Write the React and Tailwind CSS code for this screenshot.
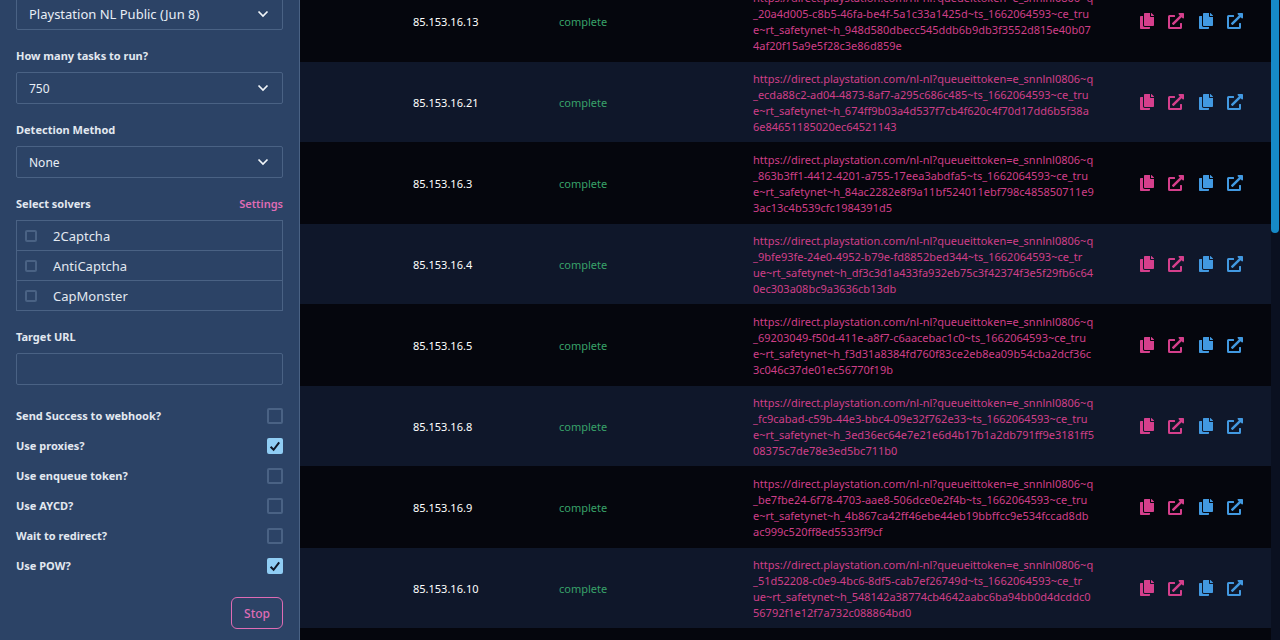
import { FaCopy, FaExternalLinkAlt } from "react-icons/fa";

const BASE = "https://direct.playstation.com/nl-nl?queueittoken=e_snnlnl0806~q";

const rows = [
  { ip: "85.153.16.13", url: [BASE, "_20a4d005-c8b5-46fa-be4f-5a1c33a1425d~ts_1662064593~ce_tru", "e~rt_safetynet~h_948d580dbecc545ddb6b9db3f3552d815e40b07", "4af20f15a9e5f28c3e86d859e"] },
  { ip: "85.153.16.21", url: [BASE, "_ecda88c2-ad04-4873-8af7-a295c686c485~ts_1662064593~ce_tru", "e~rt_safetynet~h_674ff9b03a4d537f7cb4f620c4f70d17dd6b5f38a", "6e84651185020ec64521143"] },
  { ip: "85.153.16.3", url: [BASE, "_863b3ff1-4412-4201-a755-17eea3abdfa5~ts_1662064593~ce_tru", "e~rt_safetynet~h_84ac2282e8f9a11bf524011ebf798c485850711e9", "3ac13c4b539cfc1984391d5"] },
  { ip: "85.153.16.4", url: [BASE, "_9bfe93fe-24e0-4952-b79e-fd8852bed344~ts_1662064593~ce_tr", "ue~rt_safetynet~h_df3c3d1a433fa932eb75c3f42374f3e5f29fb6c64", "0ec303a08bc9a3636cb13db"] },
  { ip: "85.153.16.5", url: [BASE, "_69203049-f50d-411e-a8f7-c6aacebac1c0~ts_1662064593~ce_tru", "e~rt_safetynet~h_f3d31a8384fd760f83ce2eb8ea09b54cba2dcf36c", "3c046c37de01ec56770f19b"] },
  { ip: "85.153.16.8", url: [BASE, "_fc9cabad-c59b-44e3-bbc4-09e32f762e33~ts_1662064593~ce_tru", "e~rt_safetynet~h_3ed36ec64e7e21e6d4b17b1a2db791ff9e3181ff5", "08375c7de78e3ed5bc711b0"] },
  { ip: "85.153.16.9", url: [BASE, "_be7fbe24-6f78-4703-aae8-506dce0e2f4b~ts_1662064593~ce_tru", "e~rt_safetynet~h_4b867ca42ff46ebe44eb19bbffcc9e534fccad8db", "ac999c520ff8ed5533ff9cf"] },
  { ip: "85.153.16.10", url: [BASE, "_51d52208-c0e9-4bc6-8df5-cab7ef26749d~ts_1662064593~ce_tr", "ue~rt_safetynet~h_548142a38774cb4642aabc6ba94bb0d4dcddc0", "56792f1e12f7a732c088864bd0"] },
];

const options = [
  { label: "Send Success to webhook?", id: "webhook", on: false },
  { label: "Use proxies?", id: "proxies", on: true },
  { label: "Use enqueue token?", id: "enqueue", on: false },
  { label: "Use AYCD?", id: "aycd", on: false },
  { label: "Wait to redirect?", id: "redirect", on: false },
  { label: "Use POW?", id: "pow", on: true },
];

function SelectBox({ id, value, large, label }) {
  return (
    <div className="grid items-center">
      <select
        id={id}
        aria-label={label}
        className={
          "col-start-1 row-start-1 h-8 w-full appearance-none rounded-[2px] border border-[#4a6284] bg-transparent px-3 pt-0.5 text-[#e8eef6] outline-none " +
          (large ? "text-[13px]" : "text-xs")
        }
      >
        <option>{value}</option>
      </select>
      <svg viewBox="0 0 20 20" className="pointer-events-none col-start-1 row-start-1 mr-2.5 size-5 justify-self-end" fill="none" stroke="#f1f5f9" strokeWidth="1.7">
        <path d="M5.5 7.5 10 12l4.5-4.5" />
      </svg>
    </div>
  );
}

function Field({ id, label, children }) {
  return (
    <div className="flex flex-col gap-1.5">
      <label htmlFor={id} className="text-[11px]/5 font-bold">{label}</label>
      {children}
    </div>
  );
}

function Check({ id, on }) {
  return (
    <span className="grid size-4 shrink-0">
      <input
        id={id}
        type="checkbox"
        defaultChecked={on}
        className="peer col-start-1 row-start-1 size-4 appearance-none rounded-[2px] border-2 border-[#4a6284] checked:border-[#90cdf4] checked:bg-[#90cdf4]"
      />
      <svg viewBox="0 0 16 16" className="pointer-events-none invisible col-start-1 row-start-1 size-4 peer-checked:visible" fill="none" stroke="#111827" strokeWidth="2">
        <path d="M3.6 8.8 6.6 11.8 12.2 4.4" />
      </svg>
    </span>
  );
}

function IconPair({ tone, what }) {
  return (
    <div className="flex items-center gap-3.5">
      <button type="button" aria-label={"Copy " + what} className={tone}><FaCopy className="h-4 w-3.5" /></button>
      <a href="#open" aria-label={"Open " + what} className={tone}><FaExternalLinkAlt className="size-4" /></a>
    </div>
  );
}

export default function App() {
  return (
    <div className="flex h-screen overflow-hidden bg-[#05060d] font-['Noto_Sans','Open_Sans',sans-serif] text-[#e2e8f0]">
      <aside className="w-[300px] shrink-0 overflow-hidden border-r border-[#4a6284] bg-[#2c4366] px-4">
        <form className="-mt-0.5 flex flex-col gap-4">
          <SelectBox id="event" label="Event" value="Playstation NL Public (Jun 8)" large />
          <Field id="tasks" label="How many tasks to run?"><SelectBox id="tasks" value="750" /></Field>
          <Field id="detection" label="Detection Method"><SelectBox id="detection" value="None" /></Field>
          <fieldset>
            <div className="mb-1.5 flex justify-between text-[11px]/5">
              <span className="font-bold">Select solvers</span>
              <a href="#settings" className="font-semibold text-[#df6cb5]">Settings</a>
            </div>
            <ul className="divide-y divide-[#4a6284] border border-[#4a6284]">
              {["2Captcha", "AntiCaptcha", "CapMonster"].map((name) => (
                <li key={name}>
                  <label className="flex h-[29px] items-center gap-4 px-2 text-[13px]">
                    <input type="checkbox" className="size-3 appearance-none rounded-[2px] border-2 border-[#4a6284]" />
                    <span className="pt-0.5">{name}</span>
                  </label>
                </li>
              ))}
            </ul>
          </fieldset>
          <Field id="target" label="Target URL">
            <input id="target" type="text" className="h-8 rounded-[2px] border border-[#4a6284] bg-transparent px-3 text-xs outline-none" />
          </Field>
          <div>
            {options.map((o) => (
              <div key={o.id} className="flex h-[30px] items-center justify-between">
                <label htmlFor={o.id} className="text-[11px]/5 font-bold">{o.label}</label>
                <Check id={o.id} on={o.on} />
              </div>
            ))}
          </div>
          <button type="button" className="h-8 self-end rounded-md border border-[#df6cb5] px-3 pt-0.5 text-xs font-medium text-[#df6cb5]">Stop</button>
        </form>
      </aside>
      <main className="min-w-0 flex-1 overflow-hidden">
        <table className="-mt-[19px] w-full table-fixed border-separate border-spacing-0 text-left">
          <colgroup>
            <col className="w-[101px]" />
            <col className="w-[146px]" />
            <col className="w-[194px]" />
            <col />
            <col className="w-[143px]" />
          </colgroup>
          <tbody>
            {rows.map((r) => (
              <tr key={r.ip} className="h-[81px] even:bg-[#0f172a] [&>td]:border-b [&>td]:border-[#05060d]">
                <td />
                <td className="px-3 pt-0.5 text-[11px] text-white">{r.ip}</td>
                <td className="px-3 pt-0.5 text-[11px] text-[#38a169]">complete</td>
                <td className="px-3 pt-0.5 text-[11px]/4 whitespace-pre text-[#cf3f88]">{r.url.join("\n")}</td>
                <td className="px-3">
                  <div className="flex items-center gap-[15px]">
                    <IconPair tone="text-[#d53f8c]" what="link" />
                    <IconPair tone="text-[#4299e1]" what="session" />
                  </div>
                </td>
              </tr>
            ))}
          </tbody>
        </table>
      </main>
      <div className="w-[9px] shrink-0 bg-[#0a1020]">
        <div className="h-[233px] w-2 rounded-b-full bg-[#168ac8]" />
      </div>
    </div>
  );
}
